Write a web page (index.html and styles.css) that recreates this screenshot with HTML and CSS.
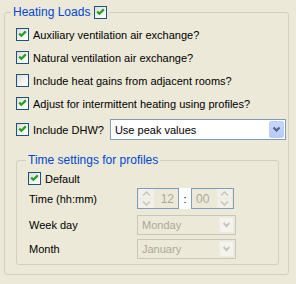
FILE: index.html
```html
<!DOCTYPE html>
<html lang="en">
<head>
    <meta charset="UTF-8">
    <title>Heating Loads</title>
    <link rel="stylesheet" href="styles.css">
</head>
<body>

<fieldset class="group outer">
    <legend class="group-title">Heating Loads <span class="check on"></span></legend>

    <div class="options">
        <div class="row"><span class="check on"></span><span class="label">Auxiliary ventilation air exchange?</span></div>
        <div class="row"><span class="check on"></span><span class="label">Natural ventilation air exchange?</span></div>
        <div class="row"><span class="check"></span><span class="label">Include heat gains from adjacent rooms?</span></div>
        <div class="row"><span class="check on"></span><span class="label">Adjust for intermittent heating using profiles?</span></div>
        <div class="row dhw">
            <span class="check on"></span><span class="label">Include DHW?</span>
            <div class="combo">
                <span class="combo-text">Use peak values</span>
                <span class="combo-btn"></span>
            </div>
        </div>
    </div>

    <fieldset class="group inner">
        <legend class="group-title">Time settings for profiles</legend>

        <div class="row default"><span class="check on"></span><span class="label">Default</span></div>

        <div class="field field-time">
            <span class="field-label">Time (hh:mm)</span>
            <div class="time">
                <div class="spin spin-left">
                    <span class="spin-btns"><span class="up"></span><span class="down"></span></span>
                    <span class="spin-val">12</span>
                </div>
                <span class="colon">:</span>
                <div class="spin">
                    <span class="spin-val">00</span>
                    <span class="spin-btns"><span class="up"></span><span class="down"></span></span>
                </div>
            </div>
        </div>

        <div class="field field-day">
            <span class="field-label">Week day</span>
            <div class="combo disabled">
                <span class="combo-text">Monday</span>
                <span class="combo-btn"></span>
            </div>
        </div>

        <div class="field">
            <span class="field-label">Month</span>
            <div class="combo disabled">
                <span class="combo-text">January</span>
                <span class="combo-btn"></span>
            </div>
        </div>
    </fieldset>
</fieldset>

</body>
</html>
```

FILE: styles.css
```css
body {
    margin: 0;
    width: 296px;
    height: 284px;
    background-color: #ece9d8;
    font-family: "Liberation Sans", Arial, sans-serif;
    font-size: 11px;
    color: #000;
}

/* group boxes */
.group {
    margin: 0;
    padding: 0;
    border: 1px solid #d0d0bf;
    border-radius: 3px;
}

.outer {
    margin: 5px 7px 0 4px;
    height: 268px;
}

.inner {
    margin: 12px 9px 0 11px;
    height: 110px;
    padding: 0 0 0 11px;
}

.group-title {
    display: flex;
    align-items: center;
    gap: 4px;
    margin-left: 6px;
    padding: 0 2px;
    color: #0046d5;
    font-size: 12px;
    line-height: 14px;
}

.inner .group-title {
    margin-left: -2px;
}

/* checkboxes */
.check {
    display: inline-block;
    flex: none;
    width: 11px;
    height: 11px;
    border: 1px solid #1c5180;
    background: linear-gradient(135deg, #dcdcd7 0%, #f4f4f1 60%, #ffffff 100%);
}

.check.on {
    background-image:
        url("data:image/svg+xml;utf8,<svg xmlns='http://www.w3.org/2000/svg' width='11' height='11'><path d='M2.2 4.6 L4.4 6.8 L8.8 2.4' fill='none' stroke='%2321a121' stroke-width='2.2'/></svg>"),
        linear-gradient(135deg, #dcdcd7 0%, #f4f4f1 60%, #ffffff 100%);
}

.options {
    padding: 4px 0 0 11px;
}

.row {
    display: flex;
    align-items: center;
    height: 23px;
}

.label {
    margin-left: 4px;
    white-space: nowrap;
}

.dhw {
    margin-top: 3px;
}

.dhw .combo {
    margin-left: 6px;
    width: 174px;
    height: 19px;
}

/* combo boxes */
.combo {
    display: flex;
    align-items: center;
    justify-content: space-between;
    border: 1px solid #7f9db9;
    background: #fff;
    box-sizing: content-box;
}

.combo-text {
    padding-left: 4px;
}

.combo-btn {
    width: 15px;
    height: 17px;
    margin-right: 1px;
    border: 1px solid #bcd0f6;
    box-sizing: border-box;
    border-radius: 2px;
    background:
        url("data:image/svg+xml;utf8,<svg xmlns='http://www.w3.org/2000/svg' width='13' height='15'><path d='M3.5 5.5 L6.5 8.5 L9.5 5.5' fill='none' stroke='%234d6185' stroke-width='2'/></svg>") center no-repeat,
        linear-gradient(#c8d8fb, #b6caf6);
}

.combo.disabled {
    width: 97px;
    height: 18px;
    border-color: #c9c7ba;
    background: #ece9d8;
    color: #aca899;
}

.combo.disabled .combo-btn {
    height: 16px;
    border-color: #ebeae4;
    background:
        url("data:image/svg+xml;utf8,<svg xmlns='http://www.w3.org/2000/svg' width='13' height='14'><path d='M3.5 5 L6.5 8 L9.5 5' fill='none' stroke='%23c9c7ba' stroke-width='2'/></svg>") center no-repeat,
        #f4f3ee;
}

/* time settings */
.default {
    height: 13px;
    margin-top: 5px;
}

.field {
    display: flex;
    align-items: center;
    margin-top: 4px;
}

.field-time {
    margin-top: 3px;
}

.field-day {
    margin-top: 6px;
}

.field-label {
    width: 108px;
    padding-left: 1px;
}

.time {
    display: flex;
    align-items: stretch;
    height: 21px;
}

.spin {
    display: flex;
    align-items: center;
    justify-content: space-between;
    width: 41px;
    border: 1px solid #7f9db9;
    background: #ece9d8;
    color: #aca899;
}

.spin-left {
    width: 40px;
}

.spin-val {
    font-size: 12px;
    padding: 0 4px;
}

.spin-btns {
    display: flex;
    flex-direction: column;
    width: 15px;
    height: 19px;
    margin: 0 1px;
}

.spin-btns span {
    flex: 1;
    background: #f1f0ea center no-repeat;
}

.spin-btns .up {
    border-bottom: 1px solid #ece9d8;
    background-image: url("data:image/svg+xml;utf8,<svg xmlns='http://www.w3.org/2000/svg' width='9' height='5'><path d='M1 4.5 L4.5 1 L8 4.5' fill='none' stroke='%23cac8bb' stroke-width='1.6'/></svg>");
}

.spin-btns .down {
    background-image: url("data:image/svg+xml;utf8,<svg xmlns='http://www.w3.org/2000/svg' width='9' height='5'><path d='M1 0.5 L4.5 4 L8 0.5' fill='none' stroke='%23cac8bb' stroke-width='1.6'/></svg>");
}

.colon {
    display: flex;
    align-items: center;
    justify-content: center;
    width: 12px;
    background: #fff;
}
```
